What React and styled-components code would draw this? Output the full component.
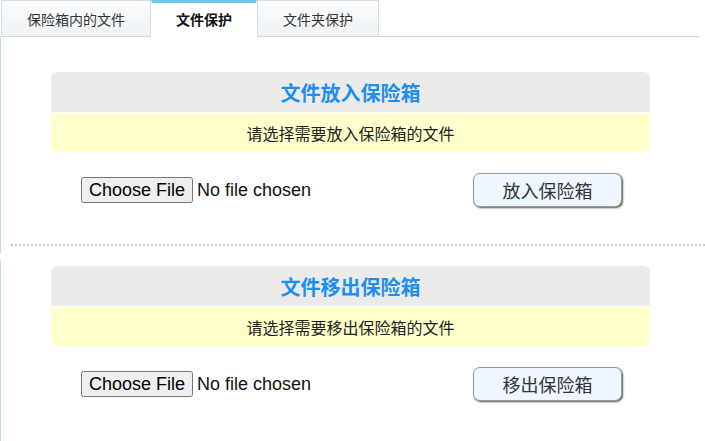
import React from 'react';
import styled, { createGlobalStyle } from 'styled-components';

const GlobalStyle = createGlobalStyle`
  body {
    margin: 0;
    background: #fff;
    font-family: "Liberation Sans", "Noto Sans CJK SC", sans-serif;
    color: #222;
  }
`;

const TabBar = styled.div`
  display: flex;
  height: 36px;
  padding-left: 1px;
  border-bottom: 1px solid #c9dce5;
  margin-right: 5px;
`;

const Tab = styled.div`
  box-sizing: border-box;
  width: ${p => p.w}px;
  height: ${p => (p.active ? 37 : 36)}px;
  display: flex;
  align-items: center;
  justify-content: center;
  font-size: 14px;
  font-weight: ${p => (p.active ? 'bold' : 'normal')};
  color: ${p => (p.active ? '#111' : '#333')};
  background: ${p => (p.active ? '#fff' : 'linear-gradient(#fbfcfd, #eef2f4)')};
  border: 1px solid ${p => (p.active ? '#fff' : '#d3dde2')};
  border-top: ${p => (p.active ? '3px solid #6cc6f0' : '1px solid #d3dde2')};
  border-bottom: none;
  padding-bottom: ${p => (p.active ? 2 : 0)}px;
`;

const Block = styled.div`
  border-left: 1px solid #c5dde8;
  padding-top: ${p => p.top}px;
  padding-bottom: ${p => p.bottom}px;
  margin-top: ${p => p.gap}px;
`;

const Panel = styled.div`
  width: 599px;
  margin-left: 50px;
`;

const PanelHead = styled.div`
  height: 40px;
  background: #ebebeb;
  border-radius: 6px 6px 0 0;
  display: flex;
  align-items: center;
  justify-content: center;
  color: #1d8ef5;
  font-size: 20px;
  font-weight: bold;
`;

const PanelTip = styled.div`
  height: 39px;
  margin-top: 1px;
  background: #ffffcc;
  border-radius: 0 0 6px 6px;
  display: flex;
  align-items: center;
  justify-content: center;
  font-size: 16px;
  color: #222;
`;

const FileRow = styled.div`
  display: flex;
  align-items: center;
  justify-content: space-between;
  height: 34px;
  margin-top: 21px;
  padding: 0 28px 0 30px;
`;

const FileInput = styled.input`
  font-family: "Liberation Sans", sans-serif;
  font-size: 18px;
  color: #111;

  &::file-selector-button {
    font: inherit;
    height: 26px;
    padding: 0 6px;
    margin-right: 4px;
  }
`;

const ActionButton = styled.button`
  width: 149px;
  height: 34px;
  border: 1px solid #9a9a9a;
  border-radius: 7px;
  background: #eef6ff;
  box-shadow: 1px 1px 2px #555;
  font-family: "Noto Sans CJK SC", sans-serif;
  font-size: 18px;
  color: #333;
  cursor: pointer;
`;

const Separator = styled.div`
  margin: 37px 0 0 10px;
  border-top: 2px dotted #c8c8c8;
`;

const sections = [
  { title: '文件放入保险箱', tip: '请选择需要放入保险箱的文件', action: '放入保险箱' },
  { title: '文件移出保险箱', tip: '请选择需要移出保险箱的文件', action: '移出保险箱' },
];

function VaultPanel({ s }) {
  return (
    <Panel>
      <PanelHead>{s.title}</PanelHead>
      <PanelTip>{s.tip}</PanelTip>
      <FileRow>
        <FileInput type="file" />
        <ActionButton>{s.action}</ActionButton>
      </FileRow>
    </Panel>
  );
}

export default function App() {
  return (
    <>
      <GlobalStyle />
      <TabBar>
        <Tab w={150}>保险箱内的文件</Tab>
        <Tab w={106} active>文件保护</Tab>
        <Tab w={122}>文件夹保护</Tab>
      </TabBar>
      <Block top={35} bottom={7} gap={0}>
        <VaultPanel s={sections[0]} />
        <Separator />
      </Block>
      <Block top={6} bottom={40} gap={7}>
        <VaultPanel s={sections[1]} />
      </Block>
    </>
  );
}
